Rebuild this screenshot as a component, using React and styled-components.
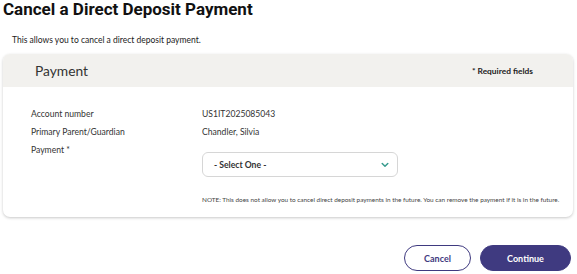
import React from 'react';
import styled, { createGlobalStyle } from 'styled-components';

const GlobalStyle = createGlobalStyle`
  body {
    margin: 0;
    background: #ffffff;
    font-family: Lato, "Noto Sans", sans-serif;
    color: #222;
  }
`;

const Page = styled.div`
  width: 577px;
  height: 274px;
  overflow: hidden;
  display: flex;
  flex-direction: column;
`;

const Title = styled.h1`
  margin: 0;
  padding: 0 0 0 3px;
  font-family: Roboto, "Liberation Sans", sans-serif;
  font-weight: 700;
  font-size: 17px;
  line-height: 18px;
  color: #111;
`;

const Intro = styled.p`
  margin: 17px 0 0 12px;
  font-size: 8.5px;
  line-height: 10px;
  color: #222;
`;

const Card = styled.section`
  margin: 9px 4px 0 3px;
  border-radius: 7px;
  background: #fff;
  box-shadow: 0 1px 3px rgba(0, 0, 0, 0.22);
  overflow: hidden;
`;

const CardHeader = styled.div`
  height: 33px;
  background: #f2f1ee;
  display: flex;
  align-items: center;
  justify-content: space-between;
  padding: 0 40px 0 32px;
`;

const CardTitle = styled.h2`
  margin: 0;
  font-weight: 400;
  font-size: 13.8px;
  color: #333;
`;

const Required = styled.span`
  font-size: 8.4px;
  font-weight: 700;
  color: #222;
`;

const CardBody = styled.div`
  padding: 22px 28px 13px 28px;
  display: grid;
  grid-template-columns: 171px 1fr;
  row-gap: 8px;
`;

const Label = styled.div`
  font-size: 8.6px;
  line-height: 10px;
  color: #333;
`;

const Value = styled.div`
  font-size: 8.6px;
  line-height: 10px;
  color: #333;
`;

const Select = styled.div`
  margin-top: 7px;
  width: 196px;
  height: 25px;
  box-sizing: border-box;
  border: 1px solid #d6d6d6;
  border-radius: 6px;
  display: flex;
  align-items: center;
  justify-content: space-between;
  padding: 0 8px 0 11px;
  font-size: 8.6px;
  font-weight: 700;
  color: #333;
`;

const Note = styled.div`
  grid-column: 2;
  margin-top: 11px;
  font-size: 6.4px;
  line-height: 8px;
  color: #444;
  white-space: nowrap;
`;

const Actions = styled.div`
  display: flex;
  justify-content: flex-end;
  gap: 9px;
  padding: 28px 6px 0 0;
`;

const Button = styled.button`
  height: 26px;
  width: ${p => p.$w}px;
  border-radius: 13px;
  font-family: Lato, "Noto Sans", sans-serif;
  font-size: 9px;
  font-weight: 700;
  cursor: pointer;
  border: 1px solid #3f3a80;
  background: ${p => (p.$primary ? '#3f3a80' : '#fff')};
  color: ${p => (p.$primary ? '#fff' : '#3f3a80')};
`;

const Chevron = () => (
  <svg width="8" height="6" viewBox="0 0 8 6">
    <path d="M1.2 1.5 L4 4.3 L6.8 1.5" fill="none" stroke="#3a9c8f" strokeWidth="1.5" strokeLinecap="round" strokeLinejoin="round" />
  </svg>
);

export default function App() {
  return (
    <Page>
      <GlobalStyle />
      <Title>Cancel a Direct Deposit Payment</Title>
      <Intro>This allows you to cancel a direct deposit payment.</Intro>
      <Card>
        <CardHeader>
          <CardTitle>Payment</CardTitle>
          <Required>* Required fields</Required>
        </CardHeader>
        <CardBody>
          <Label>Account number</Label>
          <Value>US1IT2025085043</Value>
          <Label>Primary Parent/Guardian</Label>
          <Value>Chandler, Silvia</Value>
          <Label>Payment *</Label>
          <Select>
            <span>- Select One -</span>
            <Chevron />
          </Select>
          <Note>NOTE: This does not allow you to cancel direct deposit payments in the future. You can remove the payment if it is in the future.</Note>
        </CardBody>
      </Card>
      <Actions>
        <Button $w={67}>Cancel</Button>
        <Button $w={91} $primary>Continue</Button>
      </Actions>
    </Page>
  );
}
